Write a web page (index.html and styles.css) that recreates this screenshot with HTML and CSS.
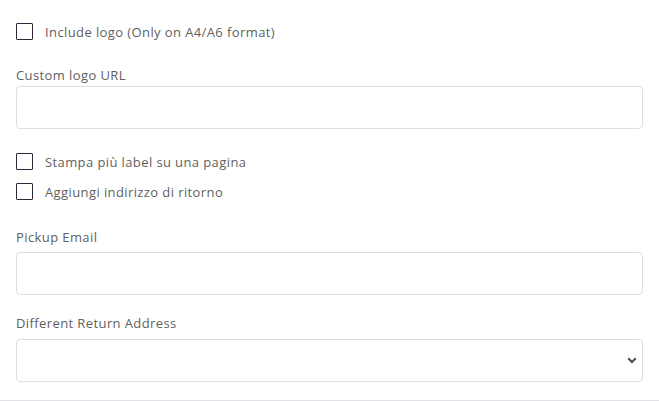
FILE: index.html
```html
<!DOCTYPE html>
<html>
<head>
<meta charset="utf-8">
<link rel="stylesheet" href="styles.css">
</head>
<body>
<div class="form">
  <label class="check check-first"><span class="box"></span><span class="check-text">Include logo (Only on A4/A6 format)</span></label>
  <div class="field field-logo">
    <div class="label">Custom logo URL</div>
    <div class="input"></div>
  </div>
  <label class="check check-second"><span class="box"></span><span class="check-text">Stampa più label su una pagina</span></label>
  <label class="check"><span class="box"></span><span class="check-text">Aggiungi indirizzo di ritorno</span></label>
  <div class="field field-email">
    <div class="label">Pickup Email</div>
    <div class="input"></div>
  </div>
  <div class="field field-return">
    <div class="label">Different Return Address</div>
    <div class="input select">
      <svg class="chev" width="10" height="7" viewBox="0 0 10 7"><path d="M1.2 1.3 L5 5 L8.8 1.3" fill="none" stroke="#4a4a4a" stroke-width="2"/></svg>
    </div>
  </div>
</div>
<div class="rule"></div>
</body>
</html>
```

FILE: styles.css
```css
html, body {
  margin: 0;
  padding: 0;
  background: #fff;
}
body {
  font-family: "Open Sans", "Liberation Sans", sans-serif;
  font-size: 13px;
  letter-spacing: 0.4px;
  color: #5f5f5f;
  width: 659px;
  height: 401px;
  overflow: hidden;
}
.form {
  padding: 0 16px;
  height: 400px;
  box-sizing: border-box;
}
.check {
  display: flex;
  align-items: center;
  height: 17px;
  margin-bottom: 13px;
}
.check-first {
  padding-top: 23px;
  margin-bottom: 25px;
}
.check-second {
  margin-top: 24px;
}
.box {
  width: 15px;
  height: 15px;
  border: 1px solid #2a2a3a;
  border-radius: 1px;
  flex: none;
}
.check-text {
  margin-left: 12px;
  line-height: 17px;
  padding-top: 2px;
}
.label {
  line-height: 20px;
}
.field-logo .label { margin-bottom: 1px; }
.field-email { margin-top: 27px; }
.field-email .label { margin-bottom: 5px; }
.field-return { margin-top: 18px; }
.field-return .label { margin-bottom: 6px; }
.input {
  height: 41px;
  border: 1px solid #dedee3;
  border-radius: 4px;
  position: relative;
}
.chev {
  position: absolute;
  right: 5px;
  top: 17px;
}
.rule {
  height: 1px;
  background: #e2e2e6;
}
```
